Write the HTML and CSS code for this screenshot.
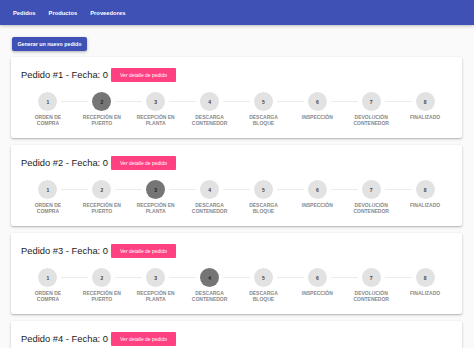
FILE: index.html
```html
<!DOCTYPE html>
<html lang="es">
<head>
  <meta charset="UTF-8" />
  <meta name="viewport" content="width=device-width, initial-scale=1.0"/>
  <title>Pedidos</title>
  <link rel="stylesheet" href="styles.css">
</head>
<body>
  <nav class="topbar">
    <a href="#">Pedidos</a>
    <a href="#">Productos</a>
    <a href="#">Proveedores</a>
  </nav>

  <main class="content">
    <button class="btn-primary">Generar un nuevo pedido</button>

    <div id="orders"></div>
  </main>

  <script>
    const steps = [
      "Orden de compra",
      "Recepción en puerto",
      "Recepción en planta",
      "Descarga contenedor",
      "Descarga bloque",
      "Inspección",
      "Devolución contenedor",
      "Finalizado"
    ];

    const orders = [
      { id: 1, fecha: 0, active: 1 },
      { id: 2, fecha: 0, active: 2 },
      { id: 3, fecha: 0, active: 3 },
      { id: 4, fecha: 0, active: 4 }
    ];

    const list = document.getElementById("orders");

    orders.forEach(order => {
      let html = '<div class="card">';
      html += '<div class="card-head"><span class="card-title">Pedido #' + order.id + ' - Fecha: ' + order.fecha + '</span>';
      html += '<button class="btn-accent">Ver detalle de pedido</button></div>';
      html += '<div class="stepper">';
      steps.forEach((label, i) => {
        const cls = i === order.active ? "step active" : "step";
        html += '<div class="' + cls + '">';
        html += '<div class="step-row">';
        html += '<span class="line' + (i === 0 ? ' hidden' : '') + '"></span>';
        html += '<span class="dot">' + (i + 1) + '</span>';
        html += '<span class="line' + (i === steps.length - 1 ? ' hidden' : '') + '"></span>';
        html += '</div>';
        html += '<div class="step-label">' + label + '</div>';
        html += '</div>';
      });
      html += '</div></div>';
      list.insertAdjacentHTML("beforeend", html);
    });
  </script>
</body>
</html>
```

FILE: styles.css
```css
body {
  margin: 0;
  padding: 0;
  background: #fafafa;
  font-family: "Liberation Sans", Arial, sans-serif;
  color: #222;
}

.topbar {
  height: 25px;
  background: #3f51b5;
  display: flex;
  align-items: center;
  gap: 13px;
  padding-left: 13px;
  box-shadow: 0 1px 3px rgba(0, 0, 0, 0.25);
}

.topbar a {
  color: #fff;
  text-decoration: none;
  font-size: 5.8px;
  font-weight: bold;
}

.content {
  padding: 12px 12px 0 11px;
}

.btn-primary {
  display: block;
  margin-left: 1px;
  height: 14px;
  width: 75px;
  padding: 0;
  border: none;
  border-radius: 2px;
  background: #3f51b5;
  color: #fff;
  font-family: inherit;
  font-size: 5.3px;
  font-weight: bold;
  box-shadow: 0 1px 3px rgba(0, 0, 0, 0.3);
}

#orders {
  margin-top: 6px;
  display: flex;
  flex-direction: column;
  gap: 7px;
}

.card {
  background: #fff;
  border-radius: 2px;
  box-shadow: 0 1px 3px rgba(0, 0, 0, 0.2), 0 1px 1px rgba(0, 0, 0, 0.12);
  padding: 10px 10px 12px 10px;
}

.card-head {
  display: flex;
  align-items: center;
  height: 15px;
}

.card-title {
  font-size: 9.4px;
  color: #222;
}

.btn-accent {
  margin-left: 3px;
  height: 14px;
  width: 65px;
  padding: 0;
  border: none;
  border-radius: 1px;
  background: #ff4081;
  color: #fff;
  font-family: inherit;
  font-size: 5px;
}

.stepper {
  display: flex;
  margin-top: 10px;
}

.step {
  flex: 1;
  display: flex;
  flex-direction: column;
  align-items: center;
}

.step-row {
  display: flex;
  align-items: center;
  width: 100%;
}

.line {
  flex: 1;
  height: 1px;
  background: #ebebeb;
}

.line.hidden {
  visibility: hidden;
}

.dot {
  width: 19px;
  height: 19px;
  border-radius: 50%;
  background: #e2e2e2;
  color: #444;
  font-size: 5px;
  font-weight: bold;
  display: flex;
  align-items: center;
  justify-content: center;
  margin: 0 4px;
}

.step.active .dot {
  background: #757575;
  color: #222;
}

.step-label {
  margin-top: 3px;
  font-size: 5px;
  line-height: 6px;
  font-weight: bold;
  text-transform: uppercase;
  text-align: center;
  color: #8a8a8a;
  padding: 0 6px;
}
```
